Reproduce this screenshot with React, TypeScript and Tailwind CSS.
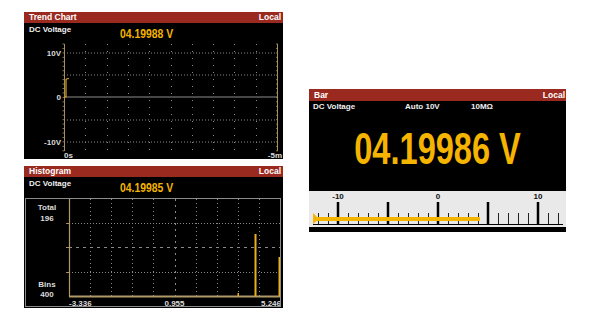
import React from 'react';

const FONT = "font-['Liberation_Sans',Arial,sans-serif]";

function Header({ title }: { title: string }) {
  return (
    <div className="flex h-[11px] items-center justify-between bg-[#9a2a20] pl-[5px] pr-[2px] text-[8.5px] leading-[11px] font-bold text-white">
      <span>{title}</span>
      <span>Local</span>
    </div>
  );
}

function ValueRow({ value, h }: { value: string; h: string }) {
  return (
    <div className={`flex items-start ${h}`}>
      <span className="w-[96px] pl-[5px] pt-[3px] text-[8px] leading-[8px] font-bold text-[#f0f0f0]">DC Voltage</span>
      <span className="inline-block origin-left scale-x-[0.83] pt-[4.5px] text-[12.5px] leading-[12.5px] font-bold text-[#f4b400]">
        {value}
      </span>
    </div>
  );
}

function TrendChart() {
  const x0 = 40;
  const x1 = 253;
  const step = (x1 - x0) / 10;
  const ys = [10, 32, 77, 99];
  const axisTicks = Array.from({ length: 25 }, (_, i) => 1 + i * 4.45);
  return (
    <svg width="259" height="116" className="block">
      {ys.map((y) => (
        <line key={y} x1={x0} x2={x1} y1={y} y2={y} stroke="#8a8a8a" strokeWidth="1" strokeDasharray="1 2" />
      ))}
      <line x1={x0} x2={x1} y1={54} y2={54} stroke="#8c8c8c" strokeWidth="1" />
      {Array.from({ length: 9 }, (_, i) => {
        const x = Math.round(x0 + (i + 1) * step) + 0.5;
        return <line key={i} x1={x} x2={x} y1={1} y2={108} stroke="#8a8a8a" strokeWidth="1" strokeDasharray="1 6" />;
      })}
      {/* axes with ruler ticks */}
      <line x1={x0 + 0.5} x2={x0 + 0.5} y1={1} y2={108} stroke="#a8905c" strokeWidth="1" />
      <line x1={x1 + 0.5} x2={x1 + 0.5} y1={1} y2={108} stroke="#a8905c" strokeWidth="1" />
      {axisTicks.map((y) => (
        <g key={y}>
          <line x1={x0 - 1.5} x2={x0 + 0.5} y1={y} y2={y} stroke="#a8905c" strokeWidth="0.8" />
          <line x1={x1 - 1} x2={x1 + 1} y1={y} y2={y} stroke="#a8905c" strokeWidth="0.8" />
        </g>
      ))}
      <path d="M40.5 54 H42 V36.5 Q42.5 35.5 45 35.5" fill="none" stroke="#e0a41c" strokeWidth="1.2" />
      <g fill="#dcdcdc" fontSize="8" fontWeight="700" fontFamily="'Liberation Sans', Arial, sans-serif">
        <text x="37" y="13" textAnchor="end">10V</text>
        <text x="37" y="57" textAnchor="end">0</text>
        <text x="37" y="102" textAnchor="end">-10V</text>
        <text x="40" y="114.5">0s</text>
        <text x="258" y="114.5" textAnchor="end">-5m</text>
      </g>
    </svg>
  );
}

function HistogramChart() {
  const x0 = 43;
  const x1 = 254;
  const step = (x1 - x0) / 10;
  return (
    <svg width="254" height="107" className="block">
      <line x1={x0} x2={x1} y1={24.5} y2={24.5} stroke="#8a8a8a" strokeDasharray="1 2" />
      <line x1={x0} x2={x1} y1={48.5} y2={48.5} stroke="#8a8a8a" strokeDasharray="3 4" />
      <line x1={x0} x2={x1} y1={73.5} y2={73.5} stroke="#8a8a8a" strokeDasharray="1 2" />
      {Array.from({ length: 9 }, (_, i) => {
        const x = Math.round(x0 + (i + 1) * step) + 0.5;
        return (
          <line
            key={i}
            x1={x}
            x2={x}
            y1={0}
            y2={97}
            stroke="#8a8a8a"
            strokeDasharray={i === 4 ? '2 4' : '1 3'}
          />
        );
      })}
      {[24.5, 48.5, 73.5].map((y) => (
        <line key={y} x1={x0 - 3} x2={x0} y1={y} y2={y} stroke="#a8905c" />
      ))}
      <line x1={x0 + 0.5} x2={x0 + 0.5} y1={0} y2={98} stroke="#b09a66" strokeWidth="1.2" />
      <line x1={x0} x2={x1} y1={97.5} y2={97.5} stroke="#b09a66" strokeWidth="2" />
      <rect x="228.5" y="35" width="2" height="62" fill="#e8b020" />
      <rect x="252.5" y="58" width="1.5" height="39" fill="#e8b020" />
      <rect x="211.5" y="94" width="1.5" height="3" fill="#e8b020" />
      <g fill="#dcdcdc" fontSize="8" fontWeight="700" fontFamily="'Liberation Sans', Arial, sans-serif">
        <text x="21" y="10.5" textAnchor="middle">Total</text>
        <text x="21" y="21.5" textAnchor="middle">196</text>
        <text x="21" y="87.5" textAnchor="middle">Bins</text>
        <text x="21" y="97.5" textAnchor="middle">400</text>
        <text x="43" y="106.5">-3.336</text>
        <text x="148.5" y="106.5" textAnchor="middle">0.955</text>
        <text x="255" y="106.5" textAnchor="end">5.246</text>
      </g>
    </svg>
  );
}

function BarScale() {
  const majors = [29, 79, 129, 179, 229];
  const minors: number[] = [];
  for (let x = 9; x <= 249; x += 10) if (!majors.includes(x)) minors.push(x);
  return (
    <svg width="257" height="36" className="block">
      <g fill="#111" fontSize="8" fontWeight="700" fontFamily="'Liberation Sans', Arial, sans-serif">
        <text x="29" y="8" textAnchor="middle">-10</text>
        <text x="129" y="8" textAnchor="middle">0</text>
        <text x="229" y="8" textAnchor="middle">10</text>
      </g>
      {minors.map((x) => (
        <line key={x} x1={x + 0.5} x2={x + 0.5} y1={22} y2={33} stroke="#222" strokeWidth="1" />
      ))}
      {majors.map((x) => (
        <line key={x} x1={x} x2={x} y1={11} y2={33} stroke="#000" strokeWidth="2.5" />
      ))}
      <line x1={4} x2={254} y1={33.5} y2={33.5} stroke="#000" strokeWidth="1.2" />
      <rect x="4" y="26" width="167" height="4" rx="1" fill="#f4b400" />
      <polygon points="4,22 4,33 10,28" fill="#f4b400" />
    </svg>
  );
}

export default function App() {
  return (
    <div className={`flex h-[324px] w-[592px] items-start gap-[26px] bg-white pl-[24px] pt-[12px] ${FONT}`}>
      <div className="flex w-[259px] flex-col gap-[7px]">
        {/* Trend chart */}
        <div className="h-[147px] bg-black">
          <Header title="Trend Chart" />
          <ValueRow value="04.19988 V" h="h-[20px]" />
          <TrendChart />
        </div>

        {/* Histogram */}
        <div className="h-[142px] bg-black">
          <Header title="Histogram" />
          <ValueRow value="04.19985 V" h="h-[21px]" />
          <div className="ml-[1px] w-[256px] border border-[#8c8c8c]">
            <HistogramChart />
          </div>
        </div>
      </div>

      {/* Bar */}
      <div className="mt-[77px] w-[257px] bg-black">
        <div className="flex h-[12px] items-center justify-between bg-[#9a2a20] pl-[5px] pr-[1px] text-[8.5px] font-bold text-white">
          <span>Bar</span>
          <span>Local</span>
        </div>
        <div className="flex h-[12px] items-start pt-[2px] text-[8px] leading-[8px] font-bold text-[#f0f0f0]">
          <span className="w-[96px] pl-[4px]">DC Voltage</span>
          <span className="w-[66px]">Auto 10V</span>
          <span>10MΩ</span>
        </div>
        <div className="h-[78px] pt-[14px] text-center">
          <span className="inline-block scale-x-[0.74] text-[44px] leading-[44px] font-bold text-[#f4b400]">
            04.19986 V
          </span>
        </div>
        <div className="h-[36px] bg-[#e9e9e9]">
          <BarScale />
        </div>
        <div className="h-[5px]" />
      </div>
    </div>
  );
}
